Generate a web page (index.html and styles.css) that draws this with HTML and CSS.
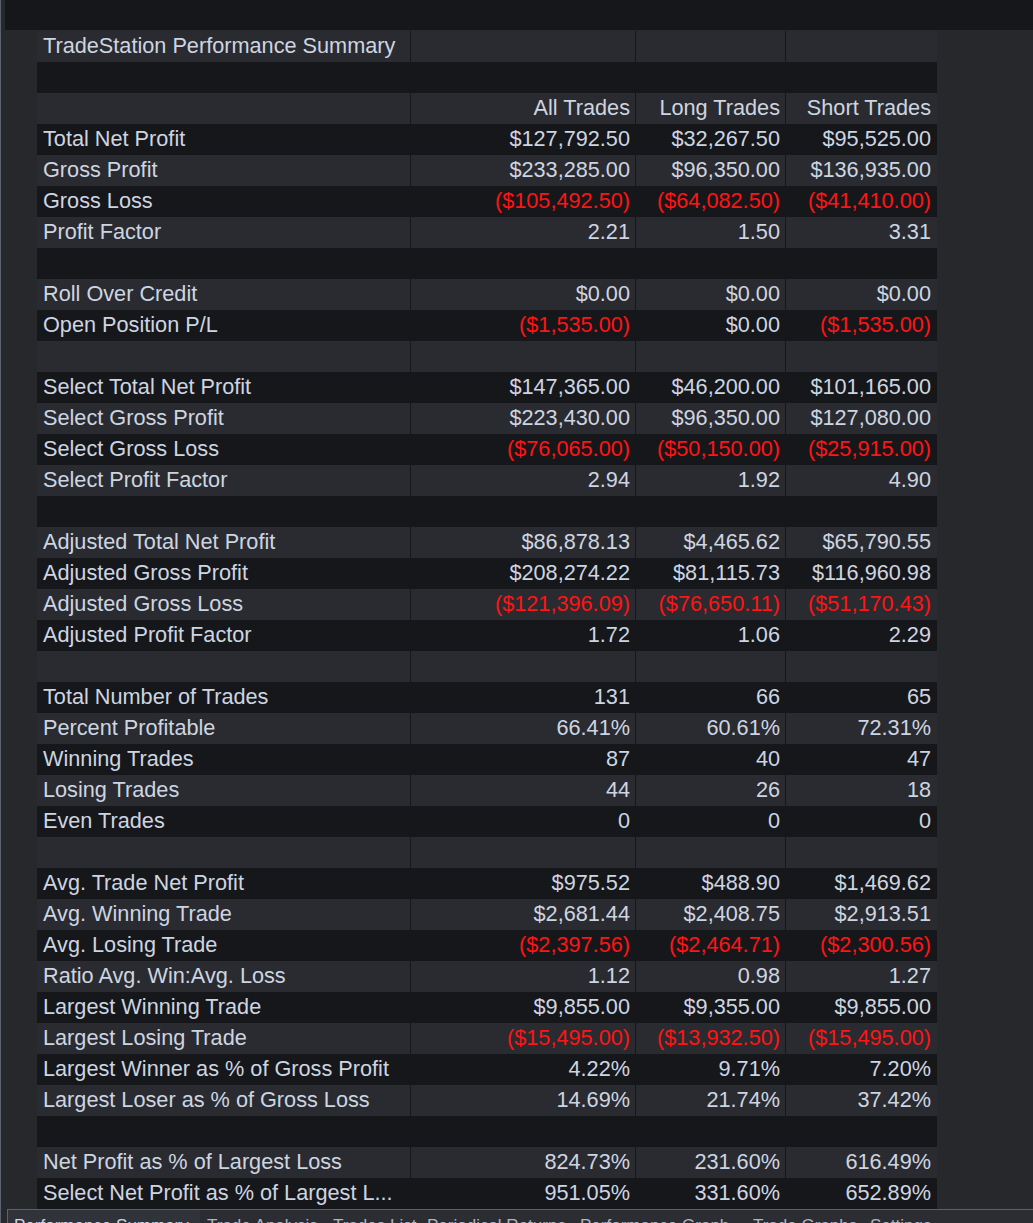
FILE: index.html
```html
<!DOCTYPE html>
<html>
<head>
<meta charset="utf-8">
<title>TradeStation Performance Summary</title>
<link rel="stylesheet" href="styles.css">
</head>
<body>
<div class="window">
  <div class="topbar"></div>
  <div class="content">
    <div class="grid">
      <div class="row"><div class="c lbl">TradeStation Performance Summary</div><div class="c"></div><div class="c"></div><div class="c"></div></div>
      <div class="row"><div class="c"></div><div class="c"></div><div class="c"></div><div class="c"></div></div>
      <div class="row"><div class="c lbl"></div><div class="c">All Trades</div><div class="c">Long Trades</div><div class="c">Short Trades</div></div>
      <div class="row"><div class="c lbl">Total Net Profit</div><div class="c">$127,792.50</div><div class="c">$32,267.50</div><div class="c">$95,525.00</div></div>
      <div class="row"><div class="c lbl">Gross Profit</div><div class="c">$233,285.00</div><div class="c">$96,350.00</div><div class="c">$136,935.00</div></div>
      <div class="row"><div class="c lbl">Gross Loss</div><div class="c neg">($105,492.50)</div><div class="c neg">($64,082.50)</div><div class="c neg">($41,410.00)</div></div>
      <div class="row"><div class="c lbl">Profit Factor</div><div class="c">2.21</div><div class="c">1.50</div><div class="c">3.31</div></div>
      <div class="row"><div class="c"></div><div class="c"></div><div class="c"></div><div class="c"></div></div>
      <div class="row"><div class="c lbl">Roll Over Credit</div><div class="c">$0.00</div><div class="c">$0.00</div><div class="c">$0.00</div></div>
      <div class="row"><div class="c lbl">Open Position P/L</div><div class="c neg">($1,535.00)</div><div class="c">$0.00</div><div class="c neg">($1,535.00)</div></div>
      <div class="row"><div class="c"></div><div class="c"></div><div class="c"></div><div class="c"></div></div>
      <div class="row"><div class="c lbl">Select Total Net Profit</div><div class="c">$147,365.00</div><div class="c">$46,200.00</div><div class="c">$101,165.00</div></div>
      <div class="row"><div class="c lbl">Select Gross Profit</div><div class="c">$223,430.00</div><div class="c">$96,350.00</div><div class="c">$127,080.00</div></div>
      <div class="row"><div class="c lbl">Select Gross Loss</div><div class="c neg">($76,065.00)</div><div class="c neg">($50,150.00)</div><div class="c neg">($25,915.00)</div></div>
      <div class="row"><div class="c lbl">Select Profit Factor</div><div class="c">2.94</div><div class="c">1.92</div><div class="c">4.90</div></div>
      <div class="row"><div class="c"></div><div class="c"></div><div class="c"></div><div class="c"></div></div>
      <div class="row"><div class="c lbl">Adjusted Total Net Profit</div><div class="c">$86,878.13</div><div class="c">$4,465.62</div><div class="c">$65,790.55</div></div>
      <div class="row"><div class="c lbl">Adjusted Gross Profit</div><div class="c">$208,274.22</div><div class="c">$81,115.73</div><div class="c">$116,960.98</div></div>
      <div class="row"><div class="c lbl">Adjusted Gross Loss</div><div class="c neg">($121,396.09)</div><div class="c neg">($76,650.11)</div><div class="c neg">($51,170.43)</div></div>
      <div class="row"><div class="c lbl">Adjusted Profit Factor</div><div class="c">1.72</div><div class="c">1.06</div><div class="c">2.29</div></div>
      <div class="row"><div class="c"></div><div class="c"></div><div class="c"></div><div class="c"></div></div>
      <div class="row"><div class="c lbl">Total Number of Trades</div><div class="c">131</div><div class="c">66</div><div class="c">65</div></div>
      <div class="row"><div class="c lbl">Percent Profitable</div><div class="c">66.41%</div><div class="c">60.61%</div><div class="c">72.31%</div></div>
      <div class="row"><div class="c lbl">Winning Trades</div><div class="c">87</div><div class="c">40</div><div class="c">47</div></div>
      <div class="row"><div class="c lbl">Losing Trades</div><div class="c">44</div><div class="c">26</div><div class="c">18</div></div>
      <div class="row"><div class="c lbl">Even Trades</div><div class="c">0</div><div class="c">0</div><div class="c">0</div></div>
      <div class="row"><div class="c"></div><div class="c"></div><div class="c"></div><div class="c"></div></div>
      <div class="row"><div class="c lbl">Avg. Trade Net Profit</div><div class="c">$975.52</div><div class="c">$488.90</div><div class="c">$1,469.62</div></div>
      <div class="row"><div class="c lbl">Avg. Winning Trade</div><div class="c">$2,681.44</div><div class="c">$2,408.75</div><div class="c">$2,913.51</div></div>
      <div class="row"><div class="c lbl">Avg. Losing Trade</div><div class="c neg">($2,397.56)</div><div class="c neg">($2,464.71)</div><div class="c neg">($2,300.56)</div></div>
      <div class="row"><div class="c lbl">Ratio Avg. Win:Avg. Loss</div><div class="c">1.12</div><div class="c">0.98</div><div class="c">1.27</div></div>
      <div class="row"><div class="c lbl">Largest Winning Trade</div><div class="c">$9,855.00</div><div class="c">$9,355.00</div><div class="c">$9,855.00</div></div>
      <div class="row"><div class="c lbl">Largest Losing Trade</div><div class="c neg">($15,495.00)</div><div class="c neg">($13,932.50)</div><div class="c neg">($15,495.00)</div></div>
      <div class="row"><div class="c lbl">Largest Winner as % of Gross Profit</div><div class="c">4.22%</div><div class="c">9.71%</div><div class="c">7.20%</div></div>
      <div class="row"><div class="c lbl">Largest Loser as % of Gross Loss</div><div class="c">14.69%</div><div class="c">21.74%</div><div class="c">37.42%</div></div>
      <div class="row"><div class="c"></div><div class="c"></div><div class="c"></div><div class="c"></div></div>
      <div class="row"><div class="c lbl">Net Profit as % of Largest Loss</div><div class="c">824.73%</div><div class="c">231.60%</div><div class="c">616.49%</div></div>
      <div class="row"><div class="c lbl">Select Net Profit as % of Largest L...</div><div class="c">951.05%</div><div class="c">331.60%</div><div class="c">652.89%</div></div>
    </div>
  </div>
  <div class="tabbar">
    <div class="tab active t1">Performance Summary</div>
    <div class="tab t2">Trade Analysis</div>
    <div class="tab t3">Trades List</div>
    <div class="tab t4">Periodical Returns</div>
    <div class="tab t5">Performance Graph</div>
    <div class="tab t6">Trade Graphs</div>
    <div class="tab t7">Settings</div>
  </div>
</div>
</body>
</html>
```
FILE: styles.css
```css
html, body {
  margin: 0;
  padding: 0;
  background: #27282c;
}
body {
  font-family: "Liberation Sans", Arial, sans-serif;
  color: #cdd5e0;
}
.window {
  height: 1223px;
  overflow: hidden;
  border-left: 1px solid #5c626d;
  box-sizing: border-box;
  background: #27282c;
}
.topbar {
  height: 30px;
  margin-left: 4px;
  background: #16171b;
}
.content {
  padding-top: 1px;
  padding-left: 36px;
}
.grid {
  width: 900px;
  display: flex;
  flex-direction: column;
}
.row {
  display: grid;
  grid-template-columns: 374px 225px 150px 151px;
  height: 31px;
}
.row:nth-child(odd) {
  background: #2a2b30;
}
.row:nth-child(even) {
  background: #16171b;
}
.c {
  font-size: 21.7px;
  line-height: 29px;
  padding-bottom: 2px;
  white-space: nowrap;
  overflow: hidden;
  text-align: right;
  padding-right: 5px;
  border-right: 1px solid #16171b;
}
.c:last-child {
  border-right: none;
  padding-right: 6px;
}
.c.lbl {
  text-align: left;
  padding-right: 0;
  padding-left: 6px;
}
.c.neg {
  color: #ff1414;
}
.tabbar {
  margin-left: 6px;
  border-top: 1px solid #5d6068;
  background: #2b2d32;
  height: 40px;
  display: flex;
}
.tab {
  font-size: 17px;
  line-height: 20px;
  padding-top: 6px;
  box-sizing: border-box;
  white-space: nowrap;
  color: #aeb6c2;
}
.tab.active {
  background: #30333a;
  border-left: 1px solid #5d6068;
  color: #cdd5e0;
}
.t1 { width: 193px; padding-left: 6px; }
.t2 { width: 126px; padding-left: 7px; }
.t3 { width: 94px; padding-left: 7px; }
.t4 { width: 153px; padding-left: 7px; }
.t5 { width: 173px; padding-left: 7px; }
.t6 { width: 117px; padding-left: 7px; }
.t7 { width: 160px; padding-left: 7px; }
```
